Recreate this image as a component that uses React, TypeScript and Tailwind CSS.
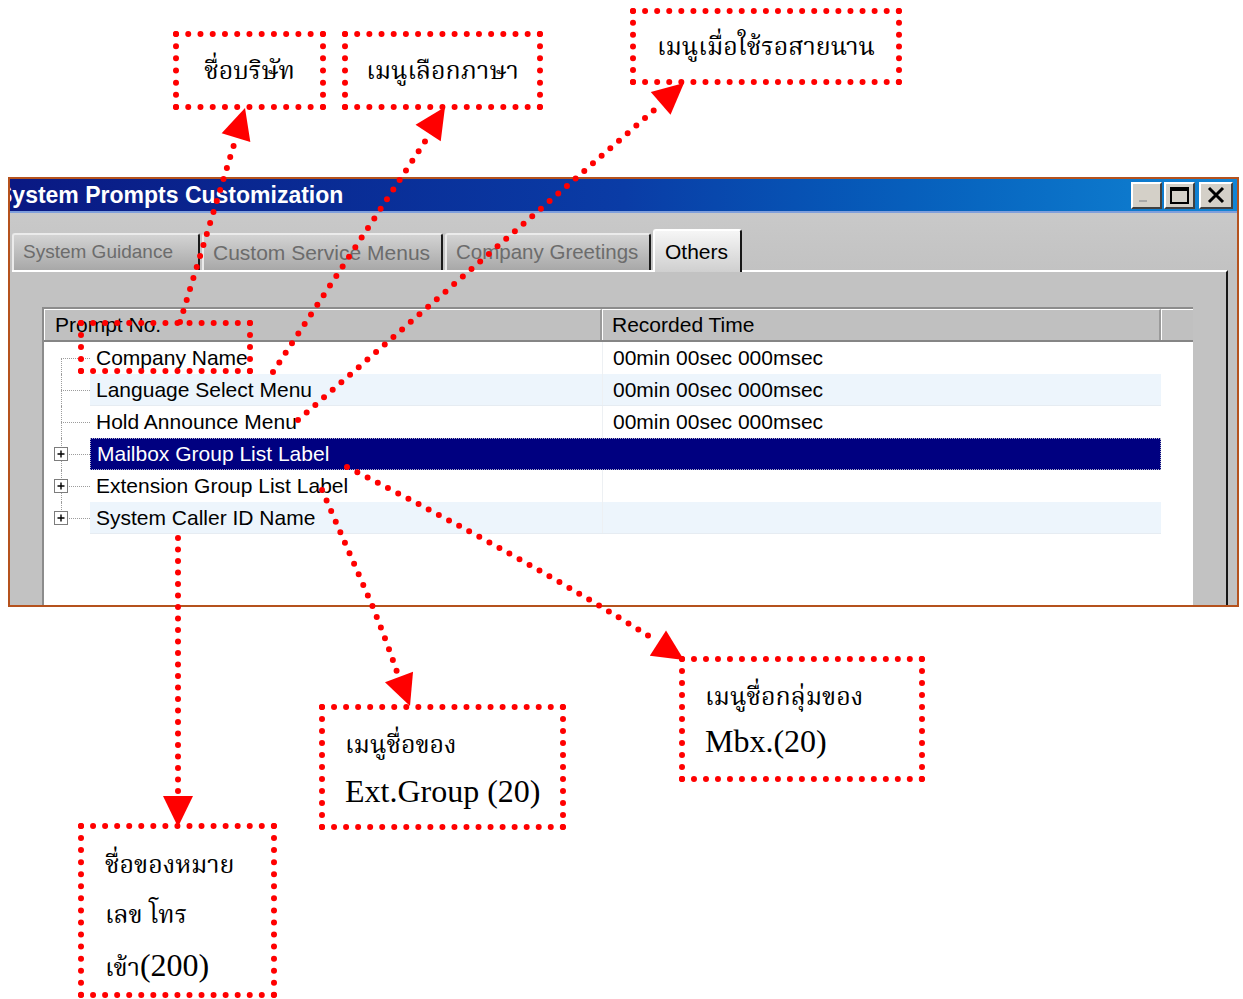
import React from 'react';

type Pt = [number, number];

// triangle arrow head, pointing from `from` toward `tip`
function head(from: Pt, tip: Pt, len = 31, half = 15) {
  const dx = tip[0] - from[0];
  const dy = tip[1] - from[1];
  const d = Math.hypot(dx, dy);
  const ux = dx / d;
  const uy = dy / d;
  const bx = tip[0] - ux * len;
  const by = tip[1] - uy * len;
  return `${tip[0]},${tip[1]} ${bx - uy * half},${by + ux * half} ${bx + uy * half},${by - ux * half}`;
}

const arrows: { d: string; from: Pt; tip: Pt }[] = [
  { d: 'M180 322 L236 138', from: [180, 322], tip: [245, 108] },
  { d: 'M273 372 L430 134', from: [273, 372], tip: [445, 107] },
  { d: 'M298 420 L660 105', from: [298, 420], tip: [684, 83] },
  { d: 'M178 538 L178 798', from: [178, 538], tip: [178, 827] },
  { d: 'M322 490 L372 605 Q388 645 397 672', from: [388, 648], tip: [410, 706] },
  { d: 'M347 467 Q520 555 652 638', from: [600, 606], tip: [684, 660] },
];

const rows = [
  { name: 'Company Name', time: '00min 00sec 000msec', plus: false },
  { name: 'Language Select Menu', time: '00min 00sec 000msec', plus: false },
  { name: 'Hold Announce Menu', time: '00min 00sec 000msec', plus: false },
  { name: 'Mailbox Group List Label', time: '', plus: true },
  { name: 'Extension Group List Label', time: '', plus: true },
  { name: 'System Caller ID Name', time: '', plus: true },
];

const thai = "font-['Liberation_Serif','Noto_Serif_Thai','Noto_Sans_Thai',serif] text-black";

const TitleButton = ({ w, children }: { w: string; children: React.ReactNode }) => (
  <div className={`flex h-[27px] ${w} items-center justify-center border-t-2 border-l-2 border-white border-r-2 border-b-2 border-r-[#404040] border-b-[#404040] bg-[#d4d0c8]`}>
    {children}
  </div>
);

const Tab = ({ label, w, size, active }: { label: string; w: string; size: string; active?: boolean }) => (
  <div
    className={
      active
        ? `relative z-10 -mb-[2px] flex h-[43px] ${w} items-center rounded-t-[3px] border-t-2 border-l-2 border-white border-r-2 border-r-[#161616] bg-linear-to-b from-[#f6f6f6] to-[#cfcfcf] pl-[10px] text-black ${size}`
        : `flex h-[37px] ${w} items-center rounded-t-[3px] border-t-2 border-l-2 border-[#ebebeb] border-r-2 border-r-[#1a1a1a] bg-linear-to-b from-[#d3d3d3] to-[#a8a8a8] pl-[9px] text-[#6c6c6c] ${size}`
    }
  >
    <span className="whitespace-nowrap">{label}</span>
  </div>
);

const TreeCell = ({ i, plus }: { i: number; plus: boolean }) => (
  <div className="relative h-full w-[46px] shrink-0">
    <div
      className={`absolute left-[17px] border-l border-dotted border-[#9c9c9c] ${
        i === 0 ? 'top-[16px] bottom-0' : i === rows.length - 1 ? 'top-0 h-[16px]' : 'top-0 bottom-0'
      }`}
    />
    <div className="absolute left-[17px] top-[16px] w-[29px] border-t border-dotted border-[#9c9c9c]" />
    {plus && (
      <div className="absolute left-[10px] top-[9px] flex h-[14px] w-[14px] items-center justify-center border border-[#7c7c7c] bg-white">
        <svg width="10" height="10" viewBox="0 0 10 10">
          <path d="M1.5 5h7M5 1.5v7" stroke="#000" strokeWidth="1.4" />
        </svg>
      </div>
    )}
  </div>
);

export default function App() {
  return (
    <div className="relative h-[999px] w-[1243px] overflow-hidden bg-white pl-[8px] pt-[177px] font-['Liberation_Sans',Arial,sans-serif]">
      {/* dialog */}
      <div className="flex h-[430px] w-[1231px] flex-col overflow-hidden border-2 border-[#b5521d] bg-[#c2c2c2]">
        <div className="flex h-[34px] shrink-0 items-center border-b-2 border-[#7f9fdc] bg-linear-to-r from-[#0a1883] via-[#0a3ca6] to-[#1285d4] pr-[4px]">
          <div className="flex-1 overflow-hidden">
            <span className="-ml-[13px] block whitespace-nowrap text-[23px] font-bold text-white">System Prompts Customization</span>
          </div>
          <div className="flex items-center gap-[2px]">
            <TitleButton w="w-[31px]">
              <div className="mt-[12px] -ml-[8px] h-[2px] w-[8px] bg-[#a8a8a8]" />
            </TitleButton>
            <TitleButton w="w-[31px]">
              <div className="h-[17px] w-[19px] border-2 border-t-4 border-black" />
            </TitleButton>
            <div className="ml-[2px]">
              <TitleButton w="w-[34px]">
                <svg width="20" height="18" viewBox="0 0 20 18">
                  <path d="M3 2l14 14M17 2L3 16" stroke="#000" strokeWidth="3" />
                </svg>
              </TitleButton>
            </div>
          </div>
        </div>

        <div className="flex flex-1 flex-col overflow-hidden">
          <div className="flex h-[57px] shrink-0 items-end gap-[2px] bg-linear-to-b from-[#c9c9c9] to-[#c2c2c2] pl-[2px]">
            <Tab label="System Guidance" w="w-[188px]" size="text-[19px]" />
            <Tab label="Custom Service Menus" w="w-[241px]" size="text-[21px]" />
            <Tab label="Company Greetings" w="w-[206px]" size="text-[20.5px]" />
            <Tab label="Others" w="w-[89px]" size="text-[21px]" active />
          </div>

          <div className="ml-[2px] mr-[9px] flex-1 overflow-hidden border-t-2 border-r-2 border-t-white border-r-[#161616] pl-[30px] pt-[35px]">
            <div className="flex h-[400px] w-[1151px] flex-col border-t-2 border-l-2 border-[#8c8c8c] bg-white">
              <div className="flex h-[33px] shrink-0 border-b-2 border-[#858585] bg-[#c0c0c0] text-[21px] text-black">
                <div className="flex w-[558px] items-center border-l border-t border-white border-r-2 border-r-[#9a9a9a] pl-[10px]">Prompt No.</div>
                <div className="flex w-[559px] items-center border-l border-t border-white border-r-2 border-r-[#9a9a9a] pl-[9px]">Recorded Time</div>
                <div className="flex-1 border-l border-t border-white" />
              </div>
              {rows.map((r, i) => {
                const sel = i === 3;
                return (
                  <div key={r.name} className="flex h-[32px] shrink-0 text-[21px]">
                    <TreeCell i={i} plus={r.plus} />
                    <div
                      className={`flex w-[1071px] ${
                        sel
                          ? 'border border-dotted border-[#b0b0c8] bg-[#000080] text-white'
                          : i % 2 === 1
                          ? 'border-b border-[#e6ecf2] bg-[#edf5fc] text-black'
                          : 'text-black'
                      }`}
                    >
                      <div className="flex w-[512px] items-center pl-[6px] whitespace-nowrap">{r.name}</div>
                      <div className={`flex flex-1 items-center pl-[10px] whitespace-nowrap ${sel ? '' : 'border-l border-[#edf0f3]'}`}>{r.time}</div>
                    </div>
                  </div>
                );
              })}
            </div>
          </div>
        </div>
      </div>

      {/* callouts */}
      <div className={`absolute left-[173px] top-[31px] flex h-[79px] w-[153px] items-center justify-center border-[6px] border-dotted border-[#ff0000] text-[25px] ${thai}`}>
        ชื่อบริษัท
      </div>
      <div className={`absolute left-[342px] top-[31px] flex h-[79px] w-[201px] items-center justify-center border-[6px] border-dotted border-[#ff0000] text-[25px] ${thai}`}>
        เมนูเลือกภาษา
      </div>
      <div className={`absolute left-[630px] top-[8px] flex h-[77px] w-[272px] items-center justify-center border-[6px] border-dotted border-[#ff0000] text-[25px] ${thai}`}>
        เมนูเมื่อใช้รอสายนาน
      </div>
      <div className="absolute left-[78px] top-[320px] h-[54px] w-[175px] border-[6px] border-dotted border-[#ff0000]" />

      <div className={`absolute left-[319px] top-[704px] h-[126px] w-[247px] border-[6px] border-dotted border-[#ff0000] pl-[20px] pt-[12px] leading-[46px] ${thai}`}>
        <div className="text-[25px]">เมนูชื่อของ</div>
        <div className="text-[32px]">Ext.Group (20)</div>
      </div>
      <div className={`absolute left-[679px] top-[656px] h-[126px] w-[246px] border-[6px] border-dotted border-[#ff0000] pl-[20px] pt-[12px] leading-[45px] ${thai}`}>
        <div className="text-[25px]">เมนูชื่อกลุ่มของ</div>
        <div className="text-[32px]">Mbx.(20)</div>
      </div>
      <div className={`absolute left-[78px] top-[823px] h-[175px] w-[199px] border-[6px] border-dotted border-[#ff0000] pl-[21px] pt-[11px] leading-[50px] ${thai}`}>
        <div className="text-[25px]">ชื่อของหมาย</div>
        <div className="text-[25px]">เลข โทร</div>
        <div className="text-[25px]">
          เข้า<span className="text-[32px]">(200)</span>
        </div>
      </div>

      <svg className="pointer-events-none absolute inset-0" width="1243" height="999" viewBox="0 0 1243 999">
        {arrows.map((a, i) => (
          <g key={i}>
            <path d={a.d} fill="none" stroke="#ff0000" strokeWidth="6" strokeLinecap="round" strokeDasharray="0 11.5" />
            <polygon points={head(a.from, a.tip)} fill="#ff0000" />
          </g>
        ))}
      </svg>
    </div>
  );
}
